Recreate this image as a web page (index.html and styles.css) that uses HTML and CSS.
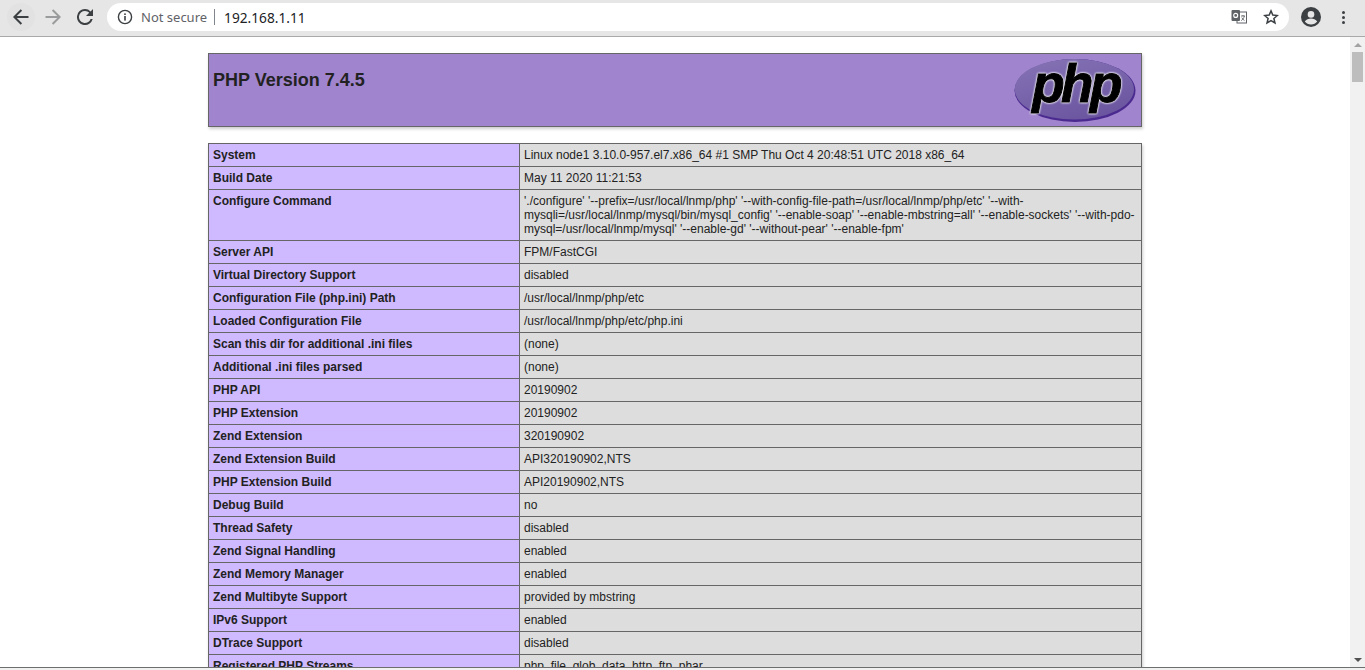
FILE: index.html
```html
<!DOCTYPE html>
<html lang="en">
<head>
  <meta charset="UTF-8" />
  <title>PHP 7.4.5 - phpinfo()</title>
  <link rel="stylesheet" href="styles.css">
</head>
<body>
  <div class="toolbar">
    <div class="nav-btn nav-btn-hover">
      <svg width="16" height="16" viewBox="0 0 16 16"><path d="M15.5 7H3.8l5.3-5.3L7.7.3 0 8l7.7 7.7 1.4-1.4L3.8 9h11.7z" fill="#3c4043"/></svg>
    </div>
    <div class="nav-btn">
      <svg width="16" height="16" viewBox="0 0 16 16"><path d="M.5 7h11.7L6.9 1.7 8.3.3 16 8l-7.7 7.7-1.4-1.4L12.2 9H.5z" fill="#9a9b9c"/></svg>
    </div>
    <div class="nav-btn">
      <svg width="16" height="16" viewBox="0 0 16 16"><path d="M13.6 2.4A7.95 7.95 0 0 0 8 0a8 8 0 1 0 7.7 10h-2.1A6 6 0 1 1 8 2c1.7 0 3.1.7 4.2 1.8L9 7h7V0z" fill="#3c4043"/></svg>
    </div>
    <div class="omnibox">
      <svg class="info-icon" width="16" height="16" viewBox="0 0 16 16"><circle cx="8" cy="8" r="6.6" fill="none" stroke="#3c4043" stroke-width="1.4"/><rect x="7.2" y="7" width="1.6" height="4.6" fill="#3c4043"/><rect x="7.2" y="4.4" width="1.6" height="1.6" fill="#3c4043"/></svg>
      <span class="not-secure">Not secure</span>
      <span class="omni-sep"></span>
      <span class="url">192.168.1.11</span>
      <span class="omni-spacer"></span>
      <svg class="translate-icon" width="16" height="16" viewBox="0 0 16 16">
        <rect x="6" y="3" width="9.5" height="11" fill="#fff" stroke="#5f6368"/>
        <rect x="0.5" y="1" width="8.5" height="11" rx="1" fill="#5f6368"/>
        <circle cx="4.7" cy="6.4" r="2" fill="none" stroke="#fff" stroke-width="1.1"/>
        <path d="M10 7h4M12 6v1M13.4 7c-.5 2-1.6 3.6-3.2 4.6M10.8 8.6c.6 1.200 1.500 2.200 2.700 3" fill="none" stroke="#5f6368" stroke-width=".9"/>
      </svg>
      <svg class="star-icon" width="16" height="16" viewBox="0 0 16 16"><path d="M8 1.9l1.8 4.200 4.600.4-3.500 3 1.050 4.500L8 11.600 4.050 14l1.050-4.500-3.500-3 4.600-.4z" fill="none" stroke="#3c4043" stroke-width="1.5" stroke-linejoin="miter"/></svg>
    </div>
    <svg class="avatar" width="20" height="20" viewBox="0 0 20 20">
      <circle cx="10" cy="10" r="10" fill="#3c4043"/>
      <circle cx="10" cy="7.400" r="3.300" fill="#e6e6e6"/>
      <path d="M3.800 14.600c1.300-2 3.800-3.100 6.200-3.100s4.900 1.100 6.200 3.100c-1.500 1.900-3.700 3-6.200 3s-4.700-1.100-6.200-3z" fill="#e6e6e6"/>
    </svg>
    <div class="menu-dots"><span></span><span></span><span></span></div>
  </div>

  <div class="viewport">
    <div class="page">
      <table class="info-table">
        <tr class="h">
          <td>
            <svg class="php-logo" width="122" height="64" viewBox="0 0 122 64">
              <defs>
                <linearGradient id="logoFill" x1="0.2" y1="0" x2="0.7" y2="1">
                  <stop offset="0" stop-color="#8472b4"/>
                  <stop offset="0.6" stop-color="#7460a8"/>
                  <stop offset="1" stop-color="#6a549f"/>
                </linearGradient>
              </defs>
              <ellipse cx="61" cy="32.500" rx="60.500" ry="31.500" fill="#4b2a8f"/>
              <ellipse cx="60.300" cy="31.300" rx="59.700" ry="30.300" fill="url(#logoFill)"/>
              <text class="php-text" x="61.500" y="44" text-anchor="middle">php</text>
            </svg>
            <h1>PHP Version 7.4.5</h1>
          </td>
        </tr>
      </table>

      <table class="info-table">
        <tr><td class="e">System</td><td class="v">Linux node1 3.10.0-957.el7.x86_64 #1 SMP Thu Oct 4 20:48:51 UTC 2018 x86_64</td></tr>
        <tr><td class="e">Build Date</td><td class="v">May 11 2020 11:21:53</td></tr>
        <tr><td class="e">Configure Command</td><td class="v">'./configure' '--prefix=/usr/local/lnmp/php' '--with-config-file-path=/usr/local/lnmp/php/etc' '--with-mysqli=/usr/local/lnmp/mysql/bin/mysql_config' '--enable-soap' '--enable-mbstring=all' '--enable-sockets' '--with-pdo-mysql=/usr/local/lnmp/mysql' '--enable-gd' '--without-pear' '--enable-fpm'</td></tr>
        <tr><td class="e">Server API</td><td class="v">FPM/FastCGI</td></tr>
        <tr><td class="e">Virtual Directory Support</td><td class="v">disabled</td></tr>
        <tr><td class="e">Configuration File (php.ini) Path</td><td class="v">/usr/local/lnmp/php/etc</td></tr>
        <tr><td class="e">Loaded Configuration File</td><td class="v">/usr/local/lnmp/php/etc/php.ini</td></tr>
        <tr><td class="e">Scan this dir for additional .ini files</td><td class="v">(none)</td></tr>
        <tr><td class="e">Additional .ini files parsed</td><td class="v">(none)</td></tr>
        <tr><td class="e">PHP API</td><td class="v">20190902</td></tr>
        <tr><td class="e">PHP Extension</td><td class="v">20190902</td></tr>
        <tr><td class="e">Zend Extension</td><td class="v">320190902</td></tr>
        <tr><td class="e">Zend Extension Build</td><td class="v">API320190902,NTS</td></tr>
        <tr><td class="e">PHP Extension Build</td><td class="v">API20190902,NTS</td></tr>
        <tr><td class="e">Debug Build</td><td class="v">no</td></tr>
        <tr><td class="e">Thread Safety</td><td class="v">disabled</td></tr>
        <tr><td class="e">Zend Signal Handling</td><td class="v">enabled</td></tr>
        <tr><td class="e">Zend Memory Manager</td><td class="v">enabled</td></tr>
        <tr><td class="e">Zend Multibyte Support</td><td class="v">provided by mbstring</td></tr>
        <tr><td class="e">IPv6 Support</td><td class="v">enabled</td></tr>
        <tr><td class="e">DTrace Support</td><td class="v">disabled</td></tr>
        <tr><td class="e">Registered PHP Streams</td><td class="v">php, file, glob, data, http, ftp, phar</td></tr>
      </table>
    </div>
    <div class="scrollbar">
      <div class="arrow-up"></div>
      <div class="thumb"></div>
      <div class="track"></div>
      <div class="arrow-down"></div>
    </div>
  </div>
  <div class="status-edge"></div>
</body>
</html>
```
FILE: styles.css
```css
* {
  box-sizing: border-box;
}
html, body {
  margin: 0;
  height: 100%;
  overflow: hidden;
}
body {
  display: flex;
  flex-direction: column;
  background: #fff;
  color: #222;
  font-family: "Liberation Sans", Arial, sans-serif;
}

/* browser chrome */
.toolbar {
  height: 37px;
  flex: none;
  display: flex;
  align-items: center;
  background: #e6e6e6;
  border-bottom: 1px solid #a9a9a9;
  padding: 0 0 2px 7px;
}
.nav-btn {
  width: 28px;
  height: 28px;
  margin-right: 4px;
  border-radius: 50%;
  display: flex;
  align-items: center;
  justify-content: center;
}
.nav-btn-hover {
  background: #e2e2e2;
}
.omnibox {
  width: 1182px;
  height: 28px;
  margin-left: 4px;
  background: #fff;
  border-radius: 14px;
  display: flex;
  align-items: center;
  padding-left: 10px;
  font-family: "Noto Sans", sans-serif;
  font-size: 13px;
}
.info-icon {
  margin-right: 8px;
}
.not-secure {
  color: #5f6368;
}
.omni-sep {
  width: 1px;
  height: 16px;
  background: #80868b;
  margin: 0 9px 0 7px;
}
.url {
  color: #202124;
  font-size: 13.700px;
}
.omni-spacer {
  flex: 1;
}
.translate-icon {
  margin-right: 16px;
}
.star-icon {
  margin-right: 10px;
}
.avatar {
  margin-left: 12px;
}
.menu-dots {
  margin-left: 21px;
  display: flex;
  flex-direction: column;
  gap: 2px;
}
.menu-dots span {
  width: 3px;
  height: 3px;
  border-radius: 50%;
  background: #3c4043;
}

/* page area */
.viewport {
  flex: 1;
  min-height: 0;
  display: flex;
}
.page {
  flex: 1;
  overflow: hidden;
  padding-top: 16px;
}
.info-table {
  width: 934px;
  margin: 0 auto 16px;
  border-collapse: collapse;
  box-shadow: 1px 2px 3px #ccc;
  font-size: 12px;
}
.info-table td {
  border: 1px solid #666;
  padding: 4px 5px 4px 4px;
  vertical-align: baseline;
}
.h td {
  background: #a084cd;
  color: #222;
}
.h h1 {
  margin: 12px 0;
  font-size: 18px;
  text-align: left;
}
.php-logo {
  float: right;
  display: block;
}
.php-text {
  font-family: "Liberation Sans", sans-serif;
  font-size: 53px;
  font-weight: bold;
  font-style: italic;
  letter-spacing: -3.500px;
  fill: #000;
  stroke: #000;
  stroke-width: 1px;
  filter: drop-shadow(0 0 0.8px #fff) drop-shadow(0 0 0.4px #fff);
}
.e {
  width: 311px;
  background: #cfb9ff;
  font-weight: bold;
}
.v {
  background: #ddd;
}

/* scrollbar */
.scrollbar {
  width: 15px;
  flex: none;
  background: #f1f1f1;
  display: flex;
  flex-direction: column;
  align-items: center;
}
.arrow-up {
  margin-top: 6px;
  border-left: 4px solid transparent;
  border-right: 4px solid transparent;
  border-bottom: 4px solid #a3a3a3;
}
.thumb {
  width: 11px;
  height: 30px;
  margin-top: 5px;
  background: #bdbdbd;
}
.track {
  flex: 1;
}
.arrow-down {
  margin-bottom: 5px;
  border-left: 4px solid transparent;
  border-right: 4px solid transparent;
  border-top: 4px solid #505050;
}
.status-edge {
  height: 3px;
  flex: none;
  background: #f1f1f1;
  border-top: 1px solid #6e6e6e;
}
```
